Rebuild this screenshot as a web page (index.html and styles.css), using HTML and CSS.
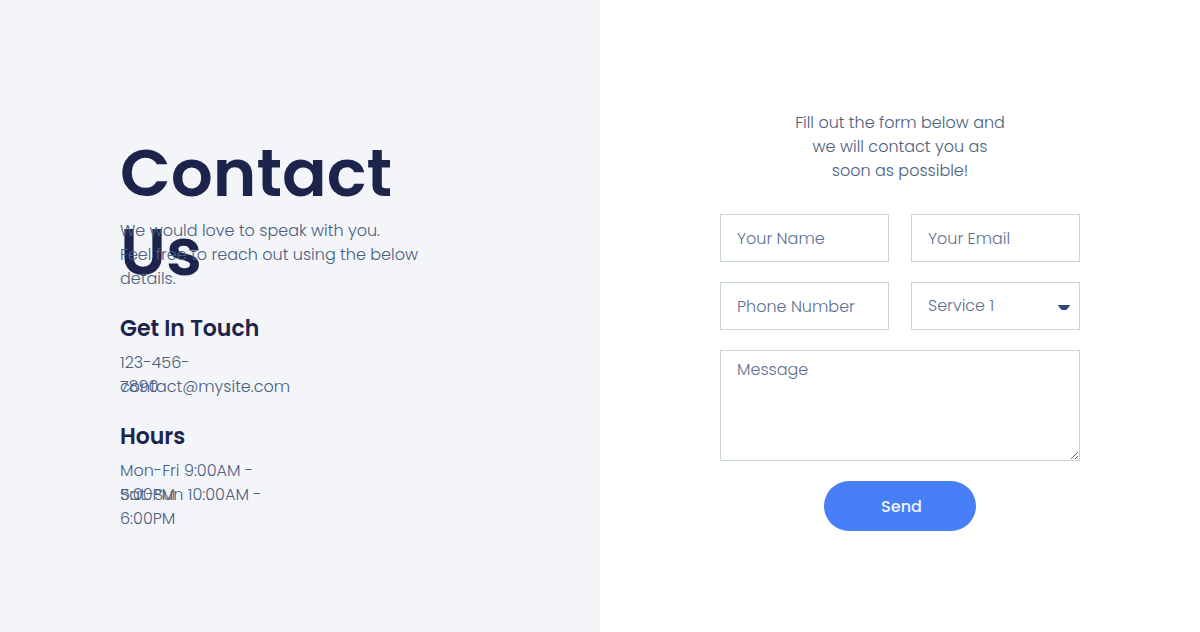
FILE: index.html
```html
<!DOCTYPE html>
<html lang="en">
<head>
<meta charset="utf-8">
<meta name="viewport" content="width=device-width, initial-scale=1">
<title>Contact Us</title>
<link rel="stylesheet" href="styles.css">
</head>
<body>
<main class="split">
  <section class="info">
    <h1 class="title">Contact Us</h1>
    <p class="intro">We would love to speak with you.<br>Feel free to reach out using the below details.</p>
    <h2 class="subtitle">Get In Touch</h2>
    <p class="line line-phone">123-456-7890</p>
    <p class="line">contact@mysite.com</p>
    <h2 class="subtitle">Hours</h2>
    <p class="line line-hours">Mon-Fri 9:00AM - 5:00PM</p>
    <p class="line line-hours">Sat-Sun 10:00AM - 6:00PM</p>
  </section>
  <section class="panel">
    <p class="lead">Fill out the form below and we will contact you as soon as possible!</p>
    <form class="form">
      <input class="field" type="text" aria-label="Your Name" placeholder="Your Name">
      <input class="field" type="email" aria-label="Your Email" placeholder="Your Email">
      <input class="field" type="tel" aria-label="Phone Number" placeholder="Phone Number">
      <div class="select">
        <select class="field" aria-label="Service">
          <option>Service 1</option>
          <option>Service 2</option>
          <option>Service 3</option>
        </select>
        <svg class="caret" viewBox="0 0 12 6" aria-hidden="true"><path d="M.5 0h11q.5 0 .3.700L8.800 4.500Q8.300 5 7.500 5h-3Q3.700 5 3.200 4.500L.2.700Q0 0 .5 0z"/></svg>
      </div>
      <textarea class="field message" aria-label="Message" placeholder="Message"></textarea>
      <button class="send" type="button">Send</button>
    </form>
  </section>
</main>
</body>
</html>
```
FILE: styles.css
```css
* { box-sizing: border-box; }

body {
  margin: 0;
  font-family: Poppins, Inter, sans-serif;
  font-size: 16px;
  font-weight: 300;
  line-height: 24px;
  color: #4a6080;
  background: #fff;
}

h1, h2, p { margin: 0; }

.split {
  display: grid;
  grid-template-columns: 1fr 1fr;
  min-height: 100vh;
}

.info {
  padding: 134px 20% 0 20%;
  background: #f3f5f9;
}

.title {
  height: 85px;
  font-size: 66px;
  line-height: 79px;
  font-weight: 600;
  color: #1c244b;
}

.intro {
  position: relative;
  max-width: 320px;
}

.subtitle {
  margin: 24px 0 8px;
  font-size: 22px;
  line-height: 28px;
  font-weight: 600;
  color: #1c244b;
}

.line { height: 24px; }
.line-phone { width: 90px; }
.line-hours { width: 160px; }

.panel {
  padding: 111px 20% 0;
}

.lead {
  max-width: 216px;
  margin: 0 auto 31px;
  text-align: center;
}

.form {
  display: grid;
  grid-template-columns: 1fr 1fr;
  gap: 20px 22px;
}

.field {
  display: block;
  width: 100%;
  min-width: 0;
  height: 48px;
  padding: 0 16px;
  border: 1px solid #c8d5dc;
  border-radius: 0;
  background: #fff;
  font: inherit;
  color: #5d7190;
  appearance: none;
}

.field::placeholder {
  color: #5d7190;
  opacity: 1;
}

.select { position: relative; }

.caret {
  position: absolute;
  right: 10px;
  top: 23px;
  width: 12px;
  height: 6px;
  fill: #2f4a75;
  pointer-events: none;
}

.message {
  grid-column: 1 / -1;
  height: 111px;
  padding: 7px 16px;
  resize: vertical;
}

.send {
  grid-column: 1 / -1;
  justify-self: center;
  padding: 14px 54px 12px 57px;
  border: 0;
  border-radius: 25px;
  background: #467ff7;
  font: inherit;
  font-weight: 500;
  color: #f0f4fe;
}
```
